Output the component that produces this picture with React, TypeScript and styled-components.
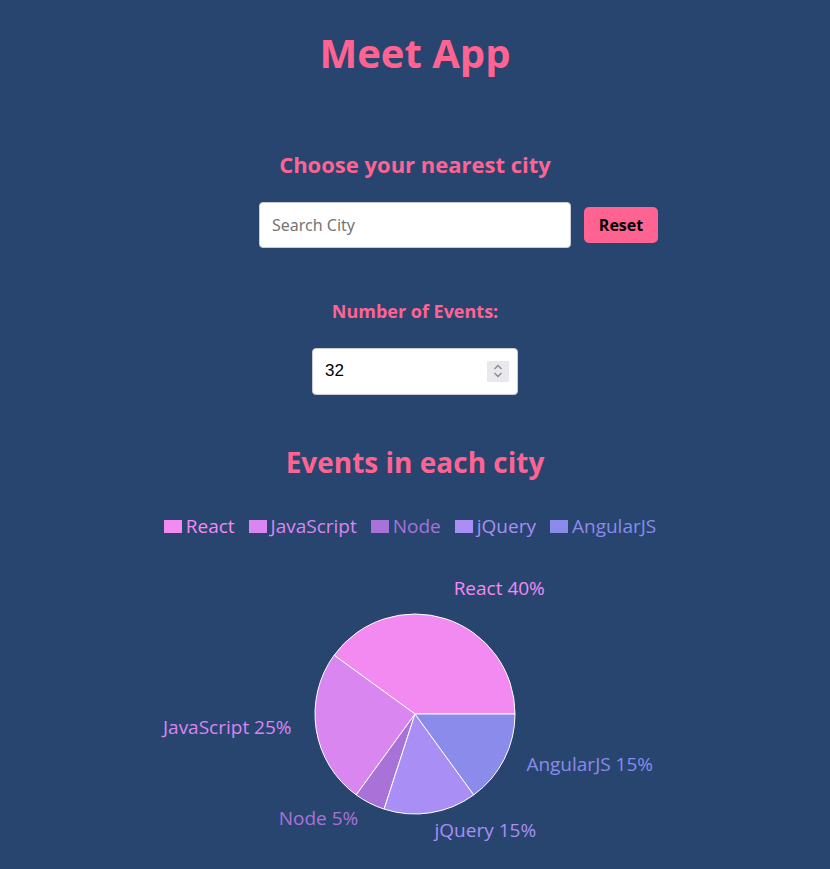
import React from "react";
import styled, { createGlobalStyle } from "styled-components";

const GlobalStyle = createGlobalStyle`
  html, body { margin: 0; padding: 0; background: #284570; }
  body { font-family: "Open Sans", "Noto Sans", sans-serif; }
`;

const Page = styled.div`
  width: 830px;
  min-height: 869px;
  background: #284570;
  display: flex;
  flex-direction: column;
  align-items: center;
  color: #ff6392;
`;

const Title = styled.h1`
  margin: 28px 0 0;
  font-size: 40px;
  line-height: 50px;
  font-weight: 700;
  color: #ff6392;
`;

const SubTitle = styled.h3<{ $size: number; $top: number }>`
  margin: ${(p) => p.$top}px 0 0;
  font-size: ${(p) => p.$size}px;
  line-height: 1.3;
  font-weight: 700;
  color: #ff6392;
`;

const SearchRow = styled.div`
  display: flex;
  align-items: center;
  gap: 13px;
  margin-top: 23px;
  margin-left: 87px;
`;

const TextInput = styled.input`
  box-sizing: border-box;
  width: 312px;
  height: 46px;
  border: 1px solid #c9ccd3;
  border-radius: 4px;
  padding: 0 12px;
  font-family: "Noto Sans", sans-serif;
  font-size: 16px;
  color: #333;
  background: #fff;
  outline: none;
  &::placeholder { color: #757575; }
`;

const ResetButton = styled.button`
  width: 74px;
  height: 36px;
  border: none;
  border-radius: 5px;
  background: #ff6392;
  color: #000;
  font-family: "Open Sans", sans-serif;
  font-weight: 700;
  font-size: 16px;
  cursor: pointer;
`;

const NumberWrap = styled.div`
  position: relative;
  margin-top: 25px;
`;

const NumberInput = styled.input`
  box-sizing: border-box;
  width: 206px;
  height: 47px;
  border: 1px solid #c9ccd3;
  border-radius: 4px;
  padding: 0 12px;
  font-family: "Liberation Sans", Arial, sans-serif;
  font-size: 17px;
  color: #000;
  background: #fff;
  outline: none;
`;

const Spinner = styled.span`
  position: absolute;
  right: 9px;
  top: 13px;
  width: 22px;
  height: 21px;
  background: #e9e9ed;
  display: flex;
  align-items: center;
  justify-content: center;
`;

const Legend = styled.ul`
  list-style: none;
  display: flex;
  gap: 14px;
  margin: 33px 10px 0 0;
  padding: 0;
`;

const LegendItem = styled.li<{ $color: string }>`
  display: flex;
  align-items: center;
  gap: 4px;
  font-size: 19px;
  color: ${(p) => p.$color};
`;

const Swatch = styled.span<{ $color: string }>`
  width: 18px;
  height: 13px;
  background: ${(p) => p.$color};
`;

const Chart = styled.svg`
  display: block;
  margin-top: 11px;
`;

const data = [
  { name: "React", value: 40, color: "#f38af1" },
  { name: "JavaScript", value: 25, color: "#d986f0" },
  { name: "Node", value: 5, color: "#a872d9" },
  { name: "jQuery", value: 15, color: "#a98ef5" },
  { name: "AngularJS", value: 15, color: "#8a8bea" },
];

const W = 830;
const H = 320;
const CX = 415;
const CY = 164;
const R = 100;

function pt(r: number, deg: number) {
  const a = (deg * Math.PI) / 180;
  return { x: CX + r * Math.cos(a), y: CY - r * Math.sin(a) };
}

function PieChart() {
  let start = 0;
  const total = data.reduce((s, d) => s + d.value, 0);
  return (
    <Chart width={W} height={H} viewBox={`0 0 ${W} ${H}`}>
      {data.map((d) => {
        const sweep = (d.value / total) * 360;
        const end = start + sweep;
        const p1 = pt(R, start);
        const p2 = pt(R, end);
        const large = sweep > 180 ? 1 : 0;
        const mid = start + sweep / 2;
        const lp = pt(125, mid);
        const anchor = Math.cos((mid * Math.PI) / 180) >= 0 ? "start" : "end";
        start = end;
        return (
          <g key={d.name}>
            <path
              d={`M${CX},${CY} L${p1.x},${p1.y} A${R},${R} 0 ${large} 0 ${p2.x},${p2.y} Z`}
              fill={d.color}
              stroke="#fff"
              strokeWidth={1}
            />
            <text
              x={lp.x}
              y={lp.y - 7}
              textAnchor={anchor}
              dominantBaseline="central"
              fill={d.color}
              fontSize={19}
              fontFamily='"Open Sans", sans-serif'
            >
              {`${d.name} ${d.value}%`}
            </text>
          </g>
        );
      })}
    </Chart>
  );
}

export default function App() {
  return (
    <>
      <GlobalStyle />
      <Page>
        <Title>Meet App</Title>
        <SubTitle $size={22} $top={72}>Choose your nearest city</SubTitle>
        <SearchRow>
          <TextInput type="text" placeholder="Search City" />
          <ResetButton type="button">Reset</ResetButton>
        </SearchRow>
        <SubTitle $size={18} $top={52}>Number of Events:</SubTitle>
        <NumberWrap>
          <NumberInput type="text" defaultValue="32" />
          <Spinner>
            <svg width="10" height="16" viewBox="0 0 10 16" fill="none" stroke="#8a8a8f" strokeWidth="1.4">
              <path d="M1.5 6 L5 2.5 L8.5 6" />
              <path d="M1.5 10 L5 13.5 L8.5 10" />
            </svg>
          </Spinner>
        </NumberWrap>
        <SubTitle $size={28} $top={49}>Events in each city</SubTitle>
        <Legend>
          {data.map((d) => (
            <LegendItem key={d.name} $color={d.color}>
              <Swatch $color={d.color} />
              {d.name}
            </LegendItem>
          ))}
        </Legend>
        <PieChart />
      </Page>
    </>
  );
}
